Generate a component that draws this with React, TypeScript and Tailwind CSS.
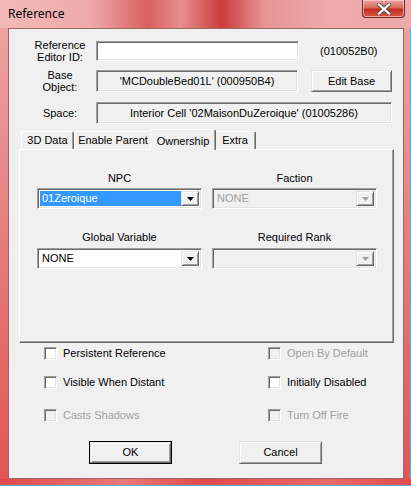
import React from "react";

const sunken =
  "border border-t-[#a0a0a0] border-l-[#a0a0a0] border-b-white border-r-white shadow-[inset_1px_1px_0_#696969,inset_-1px_-1px_0_#e3e3e3]";
const raised =
  "border border-t-[#e3e3e3] border-l-[#e3e3e3] border-b-[#696969] border-r-[#696969] shadow-[inset_1px_1px_0_#ffffff,inset_-1px_-1px_0_#a0a0a0]";

function Arrow({ disabled }: { disabled?: boolean }) {
  return (
    <svg width="7" height="4" viewBox="0 0 7 4">
      <path d="M0 0h7L3.5 4z" fill={disabled ? "#a0a0a0" : "#000"} />
    </svg>
  );
}

function Combo({
  value,
  selected,
  disabled,
}: {
  value: string;
  selected?: boolean;
  disabled?: boolean;
}) {
  return (
    <div
      className={`flex h-[21px] w-[165px] p-[1px] ${sunken} ${
        disabled ? "bg-[#f0f0f0]" : "bg-white"
      }`}
    >
      <div className="flex flex-1 p-[1px] pr-0">
        <div
          className={`flex flex-1 items-center pl-[2px] ${
            selected ? "bg-[#3399ff] text-white" : ""
          } ${disabled ? "text-[#a0a0a0]" : ""}`}
        >
          {value}
        </div>
      </div>
      <div className={`my-[1px] mr-[1px] flex w-[18px] items-center justify-center bg-[#f0f0f0] ${raised}`}>
        <Arrow disabled={disabled} />
      </div>
    </div>
  );
}

function Check({ label, disabled }: { label: string; disabled?: boolean }) {
  return (
    <div className="flex h-[13px] items-center">
      <div
        className={`h-[13px] w-[13px] ${sunken} ${disabled ? "bg-[#f0f0f0]" : "bg-white"}`}
      />
      <span className={`ml-[6px] ${disabled ? "text-[#a0a0a0]" : ""}`}>{label}</span>
    </div>
  );
}

function Tab({ label, active, w }: { label: string; active?: boolean; w: string }) {
  if (active) {
    return (
      <div
        className={`relative z-10 -mx-[2px] -mb-px flex h-[21px] items-start justify-center rounded-t-[2px] border border-b-0 border-t-white border-l-white border-r-[#696969] bg-[#f0f0f0] pt-[3px] shadow-[inset_-1px_0_0_#a0a0a0] ${w}`}
      >
        {label}
      </div>
    );
  }
  return (
    <div
      className={`flex h-[18px] items-center justify-center rounded-t-[2px] border border-b-0 border-t-white border-l-white border-r-[#696969] shadow-[inset_-1px_0_0_#a0a0a0] ${w}`}
    >
      {label}
    </div>
  );
}

export default function App() {
  return (
    <div className="relative flex h-[486px] w-[411px] flex-col overflow-hidden bg-[linear-gradient(to_bottom,#eea6a6,#e47474_60%,#e05555)] font-['Liberation_Sans',Arial,sans-serif] text-[11px] text-black">
      <div className="flex h-[28px] shrink-0 items-center bg-[linear-gradient(to_right,#f3b9b9_0%,#eeaaaa_22%,#d9605f_36%,#e98f8f_44%,#c93c3c_54%,#e69494_64%,#efaaaa_80%,#ecaaaa_100%)] pl-[8px] pb-[1px] font-['Noto_Sans',sans-serif] text-[12px]">
        Reference
      </div>
      <div className="absolute left-[362px] top-0 flex h-[18px] w-[43px] items-center justify-center rounded-b-[4px] border border-t-0 border-[#6e2a28] bg-[linear-gradient(to_bottom,#eba3a0,#d96a5e_45%,#c22e1f_55%,#d85a45)] shadow-[inset_0_0_0_1px_rgba(255,220,220,0.6)]">
        <svg width="14" height="12" viewBox="0 0 14 12">
          <path
            d="M2 1.5L7 6L12 1.5M2 10.5L7 6L12 10.5"
            stroke="#5a4a4a"
            strokeWidth="4"
            strokeLinecap="square"
            fill="none"
          />
          <path
            d="M2 1.5L7 6L12 1.5M2 10.5L7 6L12 10.5"
            stroke="#ffffff"
            strokeWidth="2.2"
            strokeLinecap="square"
            fill="none"
          />
        </svg>
      </div>

      <div className="flex flex-1">
        <div className="w-[8px] shrink-0" />
        <div className="flex h-[451px] w-[396px] flex-col border border-[#9b6565] bg-[#f0f0f0]">
          {/* editor id */}
          <div className="mt-[12px] flex h-[20px] items-center">
            <div className="ml-[17px] w-[68px] text-center leading-[12px]">
              Reference
              <br />
              Editor ID:
            </div>
            <div className={`ml-[2px] h-[20px] w-[203px] bg-white ${sunken}`} />
            <span className="ml-[21px]">(010052B0)</span>
          </div>

          {/* base object */}
          <div className="mt-[9px] flex h-[22px] items-center">
            <div className="ml-[17px] w-[68px] text-center leading-[12px]">
              Base
              <br />
              Object:
            </div>
            <div className={`ml-[2px] flex h-[22px] w-[202px] items-center justify-center ${sunken}`}>
              'MCDoubleBed01L' (000950B4)
            </div>
            <div className={`ml-[13px] flex h-[22px] w-[81px] items-center justify-center bg-[#f0f0f0] ${raised}`}>
              Edit Base
            </div>
          </div>

          {/* space */}
          <div className="mt-[10px] flex h-[22px] items-center">
            <div className="ml-[17px] w-[68px] text-center">Space:</div>
            <div className={`ml-[2px] flex h-[22px] w-[296px] items-center justify-center ${sunken}`}>
              Interior Cell '02MaisonDuZeroique' (01005286)
            </div>
          </div>

          {/* tabs */}
          <div className="ml-[10px] mt-[5px] w-[375px]">
            <div className="flex h-[20px] items-end pl-[2px]">
              <Tab label="3D Data" w="w-[53px]" />
              <Tab label="Enable Parent" w="w-[78px]" />
              <Tab label="Ownership" active w="w-[66px]" />
              <Tab label="Extra" w="w-[42px]" />
            </div>
            <div className="h-[194px] border border-t-white border-l-white border-b-[#696969] border-r-[#696969] shadow-[inset_-1px_-1px_0_#a0a0a0]">
              <div className="mt-[22px] flex">
                <div className="ml-[17px] flex w-[165px] flex-col items-center">
                  <span className="leading-[13px]">NPC</span>
                  <div className="mt-[3px]">
                    <Combo value="01Zeroique" selected />
                  </div>
                </div>
                <div className="ml-[10px] flex w-[165px] flex-col items-center">
                  <span className="leading-[13px]">Faction</span>
                  <div className="mt-[3px]">
                    <Combo value="NONE" disabled />
                  </div>
                </div>
              </div>
              <div className="mt-[22px] flex">
                <div className="ml-[17px] flex w-[165px] flex-col items-center">
                  <span className="leading-[13px]">Global Variable</span>
                  <div className="mt-[4px]">
                    <Combo value="NONE" />
                  </div>
                </div>
                <div className="ml-[10px] flex w-[165px] flex-col items-center">
                  <span className="leading-[13px]">Required Rank</span>
                  <div className="mt-[4px]">
                    <Combo value="" disabled />
                  </div>
                </div>
              </div>
            </div>
          </div>

          {/* checkboxes */}
          <div className="ml-[35px] mt-[4px] grid w-[340px] grid-cols-[224px_1fr]">
            <Check label="Persistent Reference" />
            <Check label="Open By Default" disabled />
            <div className="mt-[16px]">
              <Check label="Visible When Distant" />
            </div>
            <div className="mt-[16px]">
              <Check label="Initially Disabled" />
            </div>
            <div className="mt-[20px]">
              <Check label="Casts Shadows" disabled />
            </div>
            <div className="mt-[20px]">
              <Check label="Turn Off Fire" disabled />
            </div>
          </div>

          {/* buttons */}
          <div className="mt-[19px] flex">
            <div className="ml-[80px] flex h-[23px] w-[83px] border border-black">
              <div className={`flex flex-1 items-center justify-center bg-[#f0f0f0] ${raised}`}>OK</div>
            </div>
            <div className={`ml-[67px] flex h-[23px] w-[83px] items-center justify-center bg-[#f0f0f0] ${raised}`}>
              Cancel
            </div>
          </div>
        </div>
        <div className="flex-1 border-r border-[#4fb3dc]" />
      </div>
      <div className="h-[7px] shrink-0 border-b border-[#4fb3dc] bg-[linear-gradient(to_right,#e04a4a,#ea7a7a_30%,#e04a4a_50%,#e86a6a_80%,#e04a4a)]" />
    </div>
  );
}
